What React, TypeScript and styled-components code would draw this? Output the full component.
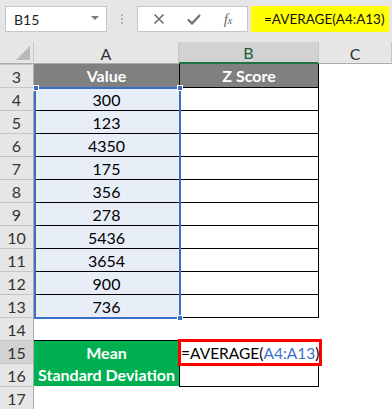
import React from "react";
import styled, { createGlobalStyle, css } from "styled-components";

const GlobalStyle = createGlobalStyle`
  html, body { margin: 0; padding: 0; background: #ffffff; }
  body { font-family: Lato, "Noto Sans", sans-serif; }
  * { box-sizing: border-box; }
`;

const Page = styled.div`
  width: 392px;
  height: 410px;
  overflow: hidden;
  background: #ffffff;
`;

const Toolbar = styled.div`
  height: 42px;
  background: #e6e6e6;
  display: flex;
  align-items: flex-start;
  padding: 6px 0 0 5px;
`;

const NameBox = styled.div`
  width: 102px;
  height: 26px;
  background: #ffffff;
  border: 1px solid #c6c6c6;
  display: flex;
  align-items: center;
  justify-content: space-between;
  padding: 0 7px 0 8px;
  font-size: 14px;
  color: #222;
`;

const Caret = styled.span`
  width: 0;
  height: 0;
  border-left: 4px solid transparent;
  border-right: 4px solid transparent;
  border-top: 4px solid #7a7a7a;
  margin-top: -3px;
`;

const Grip = styled.div`
  width: 30px;
  height: 26px;
  display: flex;
  flex-direction: column;
  align-items: center;
  justify-content: center;
  gap: 2px;
  & > i {
    width: 2px;
    height: 2px;
    background: #b4b4b4;
  }
`;

const FxBox = styled.div`
  width: 111px;
  height: 26px;
  background: #ffffff;
  border: 1px solid #c6c6c6;
  display: flex;
  align-items: center;
  justify-content: space-around;
  padding: 0 4px;
  color: #7a7a7a;
`;

const FxText = styled.span`
  font-family: "Liberation Serif", serif;
  font-style: italic;
  font-size: 15px;
  color: #6a6a6a;
  letter-spacing: -0.5px;
  & sub { font-size: 11px; vertical-align: baseline; }
`;

const FormulaInput = styled.div`
  margin-left: 3px;
  width: 138px;
  height: 26px;
  background: #ffff00;
  display: flex;
  align-items: center;
  padding-left: 13px;
  font-size: 13.5px;
  color: #111;
`;

const Sheet = styled.div`
  display: grid;
  grid-template-columns: 34px 145px 140px 1fr;
  grid-template-rows: 22px repeat(15, 23px);
  font-size: 16px;
`;

const Corner = styled.div`
  background: #e6e6e6;
  border-right: 1px solid #c6c6c6;
  border-bottom: 1px solid #ababab;
  display: flex;
  align-items: flex-end;
  justify-content: flex-end;
  padding: 0 3px 3px 0;
`;

const Triangle = styled.span`
  width: 0;
  height: 0;
  border-left: 14px solid transparent;
  border-bottom: 14px solid #b9b9b9;
`;

const ColHeader = styled.div<{ $selected?: boolean }>`
  background: ${(p) => (p.$selected ? "#d2d2d2" : "#e6e6e6")};
  border-right: 1px solid #c6c6c6;
  border-bottom: ${(p) => (p.$selected ? "2px solid #217346" : "1px solid #ababab")};
  display: flex;
  align-items: center;
  justify-content: center;
  font-size: 16px;
  color: ${(p) => (p.$selected ? "#1d5c3a" : "#333")};
  padding-top: 1px;
`;

const RowHeader = styled.div<{ $r: number; $selected?: boolean }>`
  grid-column: 1;
  grid-row: ${(p) => p.$r};
  background: ${(p) => (p.$selected ? "#d2d2d2" : "#e6e6e6")};
  border-right: 1px solid #ababab;
  border-top: 1px solid #c6c6c6;
  display: flex;
  align-items: center;
  justify-content: center;
  font-size: 16px;
  color: #333;
`;

type CellKind = "empty" | "head" | "value" | "plain" | "green";

const Cell = styled.div<{ $kind: CellKind; $r: number; $c: number; $topLine?: boolean }>`
  grid-column: ${(p) => p.$c};
  grid-row: ${(p) => p.$r};
  display: flex;
  align-items: center;
  justify-content: center;
  color: #000;
  white-space: nowrap;
  ${(p) => p.$topLine && css`border-top: 1px solid #000;`}
  ${(p) => p.$c === 3 && p.$kind !== "empty" && css`
    border-left: 1px solid #000;
    border-right: 1px solid #000;
  `}
  ${(p) => p.$kind === "head" && css`
    background: #808080;
    color: #ffffff;
    font-weight: 700;
  `}
  ${(p) => p.$kind === "value" && css`
    background: #e8eef8;
  `}
  ${(p) => p.$kind === "green" && css`
    background: #00b050;
    color: #ffffff;
    font-weight: 700;
  `}
`;

const Selection = styled.div`
  grid-column: 2;
  grid-row: 3 / 13;
  margin: 0 -2px -2px 0;
  border: 2px solid #3a6fc7;
  position: relative;
  pointer-events: none;
  z-index: 1;
`;

const Handle = styled.span<{ $pos: "tl" | "tr" | "br" }>`
  position: absolute;
  width: 6px;
  height: 6px;
  background: #3a6fc7;
  border: 1px solid #ffffff;
  ${(p) => p.$pos === "tl" && css`left: -3px; top: -4px;`}
  ${(p) => p.$pos === "tr" && css`right: -4px; top: -4px;`}
  ${(p) => p.$pos === "br" && css`right: -4px; bottom: -4px;`}
`;

const EditBox = styled.div`
  grid-column: 3;
  grid-row: 14;
  margin: -1px -3px -3px -1px;
  border: 3px solid #ff0000;
  display: flex;
  align-items: center;
  font-size: 15.5px;
  color: #000;
  white-space: nowrap;
  background: #ffffff;
  z-index: 1;
`;

const Ref = styled.span`
  color: #3b6fcf;
`;

const CursorBar = styled.span`
  display: inline-block;
  width: 1px;
  height: 17px;
  background: #000;
  margin-left: 1px;
`;

const values = ["300", "123", "4350", "175", "356", "278", "5436", "3654", "900", "736"];

const XIcon = () => (
  <svg width="12" height="12" viewBox="0 0 12 12">
    <path d="M1.5 1.5 L10.5 10.5 M10.5 1.5 L1.5 10.5" stroke="#6e6e6e" strokeWidth="1.6" />
  </svg>
);

const CheckIcon = () => (
  <svg width="14" height="12" viewBox="0 0 14 12">
    <path d="M1 6.5 L5 10.5 L13 2" fill="none" stroke="#6e6e6e" strokeWidth="2.2" />
  </svg>
);

export default function App() {
  const rows: React.ReactNode[] = [];
  for (let r = 3; r <= 17; r++) {
    const gr = r - 1;
    let a: React.ReactNode = null;
    let b: React.ReactNode = null;
    let aKind: CellKind = "empty";
    let bKind: CellKind = "empty";
    if (r === 3) {
      aKind = "head";
      bKind = "head";
      a = "Value";
      b = "Z Score";
    } else if (r >= 4 && r <= 13) {
      aKind = "value";
      bKind = "plain";
      a = values[r - 4];
    } else if (r === 15) {
      aKind = "green";
      bKind = "plain";
      a = "Mean";
    } else if (r === 16) {
      aKind = "green";
      bKind = "plain";
      a = "Standard Deviation";
    }
    const aTop = r >= 4 && r <= 15;
    const bTop = r >= 4 && r <= 17;
    rows.push(
      <RowHeader key={`h${r}`} $r={gr} $selected={r === 15}>
        {r}
      </RowHeader>,
      <Cell key={`a${r}`} $c={2} $r={gr} $kind={aKind} $topLine={aTop}>
        {a}
      </Cell>,
      <Cell key={`b${r}`} $c={3} $r={gr} $kind={bKind} $topLine={bTop}>
        {b}
      </Cell>,
      <Cell key={`c${r}`} $c={4} $r={gr} $kind="empty" />
    );
  }

  return (
    <Page>
      <GlobalStyle />
      <Toolbar>
        <NameBox>
          <span>B15</span>
          <Caret />
        </NameBox>
        <Grip>
          <i />
          <i />
          <i />
        </Grip>
        <FxBox>
          <XIcon />
          <CheckIcon />
          <FxText>
            f<sub>x</sub>
          </FxText>
        </FxBox>
        <FormulaInput>=AVERAGE(A4:A13)</FormulaInput>
      </Toolbar>
      <Sheet>
        <Corner>
          <Triangle />
        </Corner>
        <ColHeader>A</ColHeader>
        <ColHeader $selected>B</ColHeader>
        <ColHeader>C</ColHeader>
        {rows}
        <Selection>
          <Handle $pos="tl" />
          <Handle $pos="tr" />
          <Handle $pos="br" />
        </Selection>
        <EditBox>
          =AVERAGE(<Ref>A4:A13</Ref>)<CursorBar />
        </EditBox>
      </Sheet>
    </Page>
  );
}
